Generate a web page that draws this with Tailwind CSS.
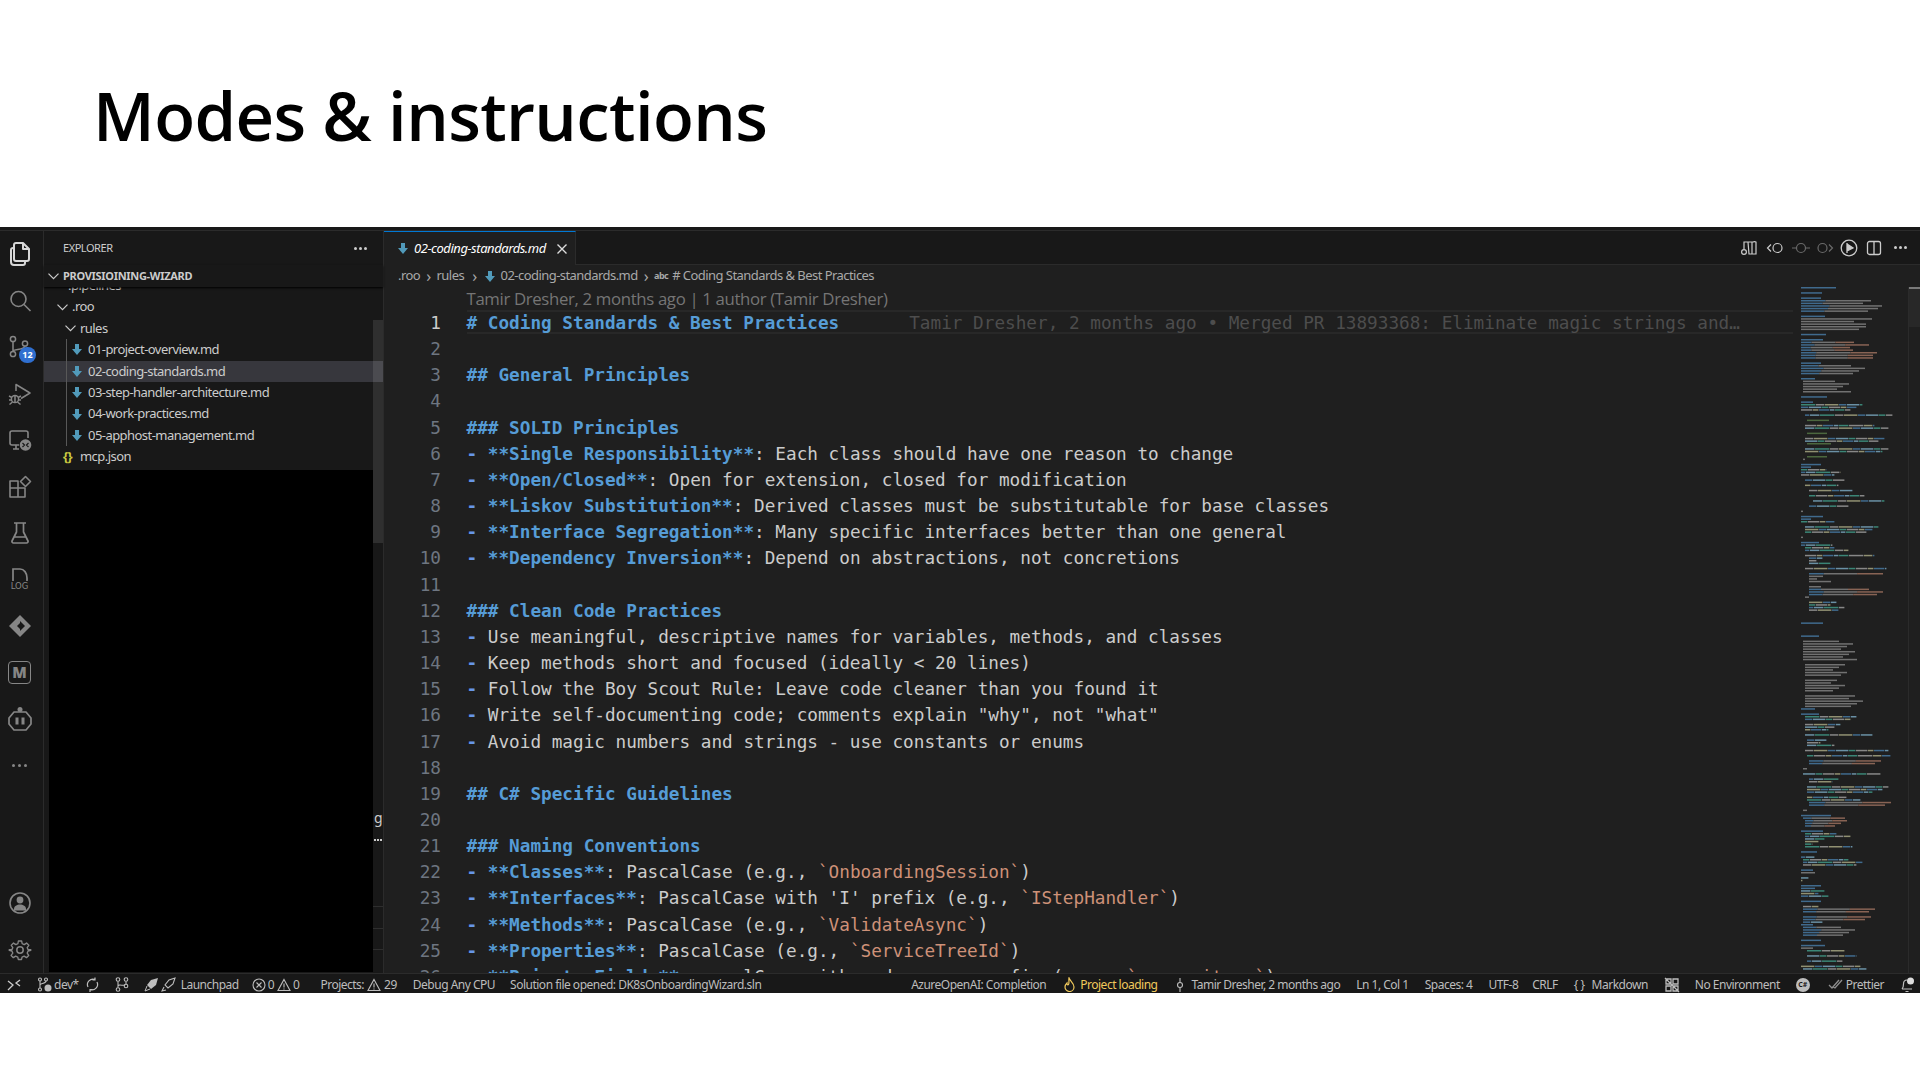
<!DOCTYPE html>
<html lang="en">
<head>
    <meta charset="UTF-8">
    <title>Modes &amp; instructions</title>
    <script src="https://cdn.jsdelivr.net/npm/@tailwindcss/browser@4"></script>
</head>
<body class="bg-white w-[1920px] h-[1080px] overflow-hidden font-['Open_Sans',sans-serif]">
    <header class="h-[227px] pl-[93px] pt-[69px]">
        <h1 class="text-[67px] leading-[92px] font-semibold text-black tracking-[-0.6px]">Modes &amp; instructions</h1>
    </header>

    <div class="h-[766px] flex flex-col bg-[#181818]">
        <div class="h-[4px] shrink-0 border-b border-[#2b2b2b]"></div>
        <div class="flex-1 flex min-h-0">

            <!-- activity bar -->
            <nav class="w-[44px] shrink-0 border-r border-[#2b2b2b] flex flex-col items-center text-[#868686]">
                <div class="w-full h-[46.5px] flex items-center justify-center pr-[4px]">
                    <svg width="24" height="26" viewBox="0 0 24 26" fill="none" stroke="#d7d7d7" stroke-width="2" stroke-linejoin="round"><path d="M8 2h7l6 6v10a2 2 0 0 1-2 2H8a2 2 0 0 1-2-2V4a2 2 0 0 1 2-2z"/><path d="M15 2v6h6"/><path d="M6 7H5a2 2 0 0 0-2 2v12a3 3 0 0 0 3 3h9a2 2 0 0 0 2-2v-2"/></svg>
                </div>
                <div class="w-full h-[46.5px] flex items-center justify-center pr-[4px]">
                    <svg width="24" height="24" viewBox="0 0 24 24" fill="none" stroke="currentColor" stroke-width="1.6"><circle cx="10.5" cy="10" r="7.5"/><path d="M16 15.5l6.5 6.5"/></svg>
                </div>
                <div class="relative w-full h-[46.5px] flex items-center justify-center pr-[4px]">
                    <svg width="24" height="26" viewBox="0 0 24 26" fill="none" stroke="currentColor" stroke-width="1.5"><circle cx="5" cy="5" r="2.6"/><circle cx="5" cy="20" r="2.6"/><circle cx="17" cy="9.5" r="2.6"/><path d="M5 7.6v9.8M17 12.1c0 4-12 3-12 5.3"/></svg>
                    <span class="absolute left-[19px] top-[23px] w-[17px] h-[16px] rounded-full bg-[#2f6fd0] text-white text-[9px] leading-[16px] font-bold text-center">12</span>
                </div>
                <div class="w-full h-[46.5px] flex items-center justify-center pr-[4px]">
                    <svg width="24" height="24" viewBox="0 0 24 24" fill="none" stroke="currentColor" stroke-width="1.5" stroke-linejoin="round"><path d="M8 9V2.5L22 11l-9 5.5"/><circle cx="7" cy="17" r="3.6"/><path d="M1 14l3 1.5M1 18h2.4M1.5 22.5l3-2.5M13 14l-3 1.5M13 18h-2.4M12.5 22.5l-3-2.5M7 13.4v7.2"/></svg>
                </div>
                <div class="w-full h-[46.5px] flex items-center justify-center pr-[4px]">
                    <svg width="24" height="24" viewBox="0 0 24 24" fill="none" stroke="currentColor" stroke-width="1.6"><path d="M11 17H4a2 2 0 0 1-2-2V5a2 2 0 0 1 2-2h14a2 2 0 0 1 2 2v5"/><path d="M5 21h6M8 17v4"/><circle cx="17.5" cy="17" r="5.8" fill="#868686" stroke="none"/><path d="M14.5 15l2 2-2 2M20.5 15l-2 2 2 2" stroke="#181818" stroke-width="1.2"/></svg>
                </div>
                <div class="w-full h-[46.5px] flex items-center justify-center pr-[4px]">
                    <svg width="24" height="24" viewBox="0 0 24 24" fill="none" stroke="currentColor" stroke-width="1.6" stroke-linejoin="round"><path d="M2 6h8v7h7v9H2zM2 13h8v9"/><path d="M17.5 1.5l5 5-5 5-5-5z"/></svg>
                </div>
                <div class="w-full h-[46.5px] flex items-center justify-center pr-[4px]">
                    <svg width="22" height="24" viewBox="0 0 22 24" fill="none" stroke="currentColor" stroke-width="1.7" stroke-linejoin="round"><path d="M5 2h12M7.5 2v9L3 20a1.5 1.5 0 0 0 1.4 2h13.2a1.5 1.5 0 0 0 1.4-2l-4.5-9V2M5.5 16h11"/></svg>
                </div>
                <div class="w-full h-[46.5px] flex flex-col items-center justify-center pr-[4px]">
                    <svg width="16" height="13" viewBox="0 0 16 13" fill="none" stroke="currentColor" stroke-width="1.7"><path d="M1 13V1h7c4 0 7 4 7 9v3"/></svg>
                    <span class="text-[8.5px] leading-[9px] mt-[1px] font-['DejaVu_Sans',sans-serif]">LOG</span>
                </div>
                <div class="w-full h-[46.5px] flex items-center justify-center pr-[4px]">
                    <svg width="24" height="24" viewBox="0 0 24 24"><path d="M12 1l11 11-11 11L1 12z" fill="#868686"/><path d="M12 7l5 5-5 5z" fill="#181818"/><path d="M12 9l-3 3 3 3z" fill="#181818"/></svg>
                </div>
                <div class="w-full h-[46.5px] flex items-center justify-center pr-[4px]">
                    <div class="w-[23px] h-[23px] rounded-[4px] border-[1.5px] border-[#868686] flex items-center justify-center text-[15px] leading-none font-extrabold">M</div>
                </div>
                <div class="w-full h-[46.5px] flex items-center justify-center pr-[4px]">
                    <svg width="24" height="26" viewBox="0 0 24 26" fill="none" stroke="currentColor" stroke-width="1.7" stroke-linejoin="round"><circle cx="12" cy="3.5" r="2.5" fill="#868686" stroke="none"/><path d="M6 6h12l5 6v6l-5 6H6l-5-6v-6z"/><rect x="7.5" y="11.5" width="3" height="7" fill="#868686" stroke="none"/><rect x="13.5" y="11.5" width="3" height="7" fill="#868686" stroke="none"/></svg>
                </div>
                <div class="w-full h-[46.5px] flex items-center justify-center pr-[4px] gap-[3px]">
                    <span class="w-[3px] h-[3px] rounded-full bg-[#868686]"></span>
                    <span class="w-[3px] h-[3px] rounded-full bg-[#868686]"></span>
                    <span class="w-[3px] h-[3px] rounded-full bg-[#868686]"></span>
                </div>
                <div class="mt-auto w-full h-[46.5px] flex items-center justify-center pr-[4px]">
                    <svg width="24" height="24" viewBox="0 0 24 24" fill="none" stroke="currentColor" stroke-width="1.6"><circle cx="12" cy="12" r="10"/><circle cx="12" cy="9" r="3.4" fill="#868686" stroke="none"/><path d="M6 18c0-6 12-6 12 0v1.5H6z" fill="#868686" stroke="none"/></svg>
                </div>
                <div class="w-full h-[46.5px] flex items-center justify-center pr-[4px]">
                    <svg width="24" height="24" viewBox="0 0 24 24" fill="none" stroke="currentColor" stroke-width="1.5" stroke-linejoin="round"><circle cx="12" cy="12" r="3.2"/><path d="M10.2 2h3.6l.6 3 2.3 1 2.6-1.7 2.5 2.5L20 9.4l1 2.2 3 0v.8l-3 .7-1 2.3 1.7 2.6-2.5 2.5-2.6-1.7-2.3 1-.6 2.7h-3.6l-.6-2.7-2.3-1-2.6 1.7-2.5-2.5L4 15.4l-1-2.3-3-.7v-.8l3 0 1-2.2-1.7-2.6 2.5-2.5 2.6 1.7 2.3-1z" transform="translate(1.2 1.2) scale(.9)"/></svg>
                </div>
            </nav>

            <!-- explorer -->
            <aside class="w-[340px] shrink-0 relative flex flex-col border-r border-[#2b2b2b] text-[13px] text-[#cccccc] font-['Noto_Sans',sans-serif] tracking-[-0.55px]">
                <div class="h-[34px] shrink-0 flex items-center justify-between pl-[19px] pr-[16px] text-[11px] tracking-[-0.45px]">
                    <span>EXPLORER</span>
                    <span class="flex gap-[2px]"><i class="w-[3px] h-[3px] rounded-full bg-[#cccccc]"></i><i class="w-[3px] h-[3px] rounded-full bg-[#cccccc]"></i><i class="w-[3px] h-[3px] rounded-full bg-[#cccccc]"></i></span>
                </div>
                <div class="relative z-10 h-[22px] shrink-0 flex items-center bg-[#181818] text-[11px] font-bold tracking-[-0.3px] pl-[4px] shadow-[0_1px_2px_#000]">
                    <svg width="11" height="7" viewBox="0 0 11 7" fill="none" stroke="#cccccc" stroke-width="1.2" class="mr-[4px]"><path d="M.5.7l5 5 5-5"/></svg>
                    PROVISIOINING-WIZARD
                </div>
                <div class="relative h-[183px] shrink-0 overflow-hidden">
                    <div class="-mt-[12px]">
                        <div class="h-[21.4px] flex items-center pl-[24px]">.pipelines</div>
                        <div class="h-[21.4px] flex items-center pl-[13px]"><svg width="11" height="7" viewBox="0 0 11 7" fill="none" stroke="#cccccc" stroke-width="1.2" class="mr-[4px]"><path d="M.5.7l5 5 5-5"/></svg>.roo</div>
                        <div class="h-[21.4px] flex items-center pl-[21px]"><svg width="11" height="7" viewBox="0 0 11 7" fill="none" stroke="#cccccc" stroke-width="1.2" class="mr-[4px]"><path d="M.5.7l5 5 5-5"/></svg>rules</div>
                        <div class="relative">
                            <div class="absolute left-[22px] top-0 bottom-0 w-px bg-[#585858]"></div>
                            <div class="h-[21.4px] flex items-center pl-[28px]"><svg width="10" height="11" viewBox="0 0 10 11" fill="#519aba" class="mr-[6px]"><path d="M3 0h4v5h3l-5 6-5-6h3z"/></svg>01-project-overview.md</div>
                            <div class="h-[21.4px] flex items-center pl-[28px] bg-[#37373d]"><svg width="10" height="11" viewBox="0 0 10 11" fill="#519aba" class="mr-[6px]"><path d="M3 0h4v5h3l-5 6-5-6h3z"/></svg>02-coding-standards.md</div>
                            <div class="h-[21.4px] flex items-center pl-[28px]"><svg width="10" height="11" viewBox="0 0 10 11" fill="#519aba" class="mr-[6px]"><path d="M3 0h4v5h3l-5 6-5-6h3z"/></svg>03-step-handler-architecture.md</div>
                            <div class="h-[21.4px] flex items-center pl-[28px]"><svg width="10" height="11" viewBox="0 0 10 11" fill="#519aba" class="mr-[6px]"><path d="M3 0h4v5h3l-5 6-5-6h3z"/></svg>04-work-practices.md</div>
                            <div class="h-[21.4px] flex items-center pl-[28px]"><svg width="10" height="11" viewBox="0 0 10 11" fill="#519aba" class="mr-[6px]"><path d="M3 0h4v5h3l-5 6-5-6h3z"/></svg>05-apphost-management.md</div>
                        </div>
                        <div class="h-[21.4px] flex items-center pl-[19px]"><span class="w-[17px] text-[#cbcb41] font-bold tracking-[-0.5px]">{}</span>mcp.json</div>
                    </div>
                </div>
                <div class="flex-1 flex min-h-0 pl-[5px] mb-[1px]">
                    <div class="w-[324px] bg-black"></div>
                    <div class="flex-1 relative overflow-hidden text-[14px] leading-[16px]">
                        <div class="pt-[340px] pl-[1px]">g</div>
                        <div class="flex gap-[1px] pt-[13px] pl-[1px]"><i class="w-[2px] h-[2px] bg-[#cccccc]"></i><i class="w-[2px] h-[2px] bg-[#cccccc]"></i><i class="w-[2px] h-[2px] bg-[#cccccc]"></i></div>
                        <div class="h-px bg-[#2e2e2e] mt-[65px]"></div>
                        <div class="h-px bg-[#2e2e2e] mt-[21px]"></div>
                        <div class="h-px bg-[#2e2e2e] mt-[20px]"></div>
                    </div>
                </div>
                <div class="absolute right-0 top-[89px] w-[10px] h-[223px] bg-white/10"></div>
            </aside>

            <!-- editor -->
            <main class="flex-1 min-w-0 flex flex-col bg-[#1f1f1f]">
                <div class="h-[34px] shrink-0 flex items-stretch bg-[#181818] border-b border-[#2b2b2b]">
                    <div class="w-[192px] -mb-px border-t border-r border-t-[#0078d4] border-r-[#2b2b2b] bg-[#1f1f1f] flex items-center pl-[14px] text-[13px] text-[#ffffff] italic font-['Noto_Sans',sans-serif] tracking-[-0.45px]">
                        <svg width="10" height="11" viewBox="0 0 10 11" fill="#519aba" class="mr-[6px]"><path d="M3 0h4v5h3l-5 6-5-6h3z"/></svg>
                        02-coding-standards.md
                        <svg width="12" height="12" viewBox="0 0 12 12" fill="none" stroke="#dddddd" stroke-width="1.4" class="ml-[10px]"><path d="M1.5 1.5l9 9M10.5 1.5l-9 9"/></svg>
                    </div>
                    <div class="ml-auto flex items-center text-[#cccccc] pr-[13px]">
                        <svg width="18" height="18" viewBox="0 0 18 18" fill="none" stroke="currentColor" stroke-width="1.2" class="mr-[8px]"><path d="M8 3h5a3 3 0 0 1 3 0v12h-7zM8 3H4v7M12 3v12"/><circle cx="4" cy="13" r="2.4"/></svg>
                        <svg width="18" height="14" viewBox="0 0 18 14" fill="none" stroke="currentColor" stroke-width="1.2" class="mr-[8px]"><circle cx="11.5" cy="7" r="4.5"/><path d="M5 3.5L1.5 7 5 10.5"/></svg>
                        <svg width="18" height="14" viewBox="0 0 18 14" fill="none" stroke="#6a6a6a" stroke-width="1.2" class="mr-[6px]"><circle cx="9" cy="7" r="4.5"/><path d="M0 7h4.5M13.5 7H18"/></svg>
                        <svg width="18" height="14" viewBox="0 0 18 14" fill="none" stroke="#6a6a6a" stroke-width="1.2" class="mr-[6px]"><circle cx="6.5" cy="7" r="4.5"/><path d="M13 3.5L16.5 7 13 10.5"/></svg>
                        <svg width="18" height="18" viewBox="0 0 18 18" fill="none" stroke="currentColor" stroke-width="1.3" class="mr-[8px]"><circle cx="9" cy="9" r="7.8"/><path d="M7 4v10M7 5l6 4-6 3" fill="currentColor"/></svg>
                        <svg width="16" height="16" viewBox="0 0 16 16" fill="none" stroke="currentColor" stroke-width="1.3" class="mr-[12px]"><rect x="1.5" y="1.5" width="13" height="13" rx="2"/><path d="M8 1.5v13"/></svg>
                        <span class="flex gap-[2px]"><i class="w-[3px] h-[3px] rounded-full bg-[#cccccc]"></i><i class="w-[3px] h-[3px] rounded-full bg-[#cccccc]"></i><i class="w-[3px] h-[3px] rounded-full bg-[#cccccc]"></i></span>
                    </div>
                </div>
                <div class="h-[22px] shrink-0 flex items-center pl-[14px] text-[13px] text-[#a9a9a9] font-['Noto_Sans',sans-serif] tracking-[-0.55px] gap-[6px]">
                    <span>.roo</span><span class="text-[16px] leading-none">›</span><span>rules</span><span class="mx-[2px] text-[16px] leading-none">›</span>
                    <svg width="10" height="11" viewBox="0 0 10 11" fill="#519aba"><path d="M3 0h4v5h3l-5 6-5-6h3z"/></svg>
                    <span>02-coding-standards.md</span><span class="text-[16px] leading-none">›</span><span class="text-[9px] font-bold">abc</span><span class="-ml-[2px]"># Coding Standards &amp; Best Practices</span>
                </div>
                <div class="flex-1 min-h-0 flex">
                    <div class="w-[1416px] shrink-0 overflow-hidden font-['DejaVu_Sans_Mono',monospace] text-[17.7px] text-[#cccccc] whitespace-nowrap">
                        <div class="h-[23px] pl-[82.5px] font-['Open_Sans',sans-serif] text-[16.8px] leading-[24px] text-[#757575] tracking-[-0.35px]">Tamir Dresher, 2 months ago | 1 author (Tamir Dresher)</div>
                        <div class="flex h-[26.17px] leading-[26.17px]"><span class="w-[57px] text-right text-[#cccccc]">1</span><span class="ml-[25.5px] w-[1326px] h-[24px] border-y-2 border-[#282828] leading-[22.5px]"><b class="text-[#569cd6]"># Coding Standards &amp; Best Practices</b><span class="ml-[70px] text-[#4d4d4d]">Tamir Dresher, 2 months ago • Merged PR 13893368: Eliminate magic strings and…</span></span></div>
                        <div class="flex h-[26.17px] leading-[26.17px]"><span class="w-[57px] text-right text-[#6e7681]">2</span></div>
                        <div class="flex h-[26.17px] leading-[26.17px]"><span class="w-[57px] text-right text-[#6e7681]">3</span><span class="ml-[25.5px]"><b class="text-[#569cd6]">## General Principles</b></span></div>
                        <div class="flex h-[26.17px] leading-[26.17px]"><span class="w-[57px] text-right text-[#6e7681]">4</span></div>
                        <div class="flex h-[26.17px] leading-[26.17px]"><span class="w-[57px] text-right text-[#6e7681]">5</span><span class="ml-[25.5px]"><b class="text-[#569cd6]">### SOLID Principles</b></span></div>
                        <div class="flex h-[26.17px] leading-[26.17px]"><span class="w-[57px] text-right text-[#6e7681]">6</span><span class="ml-[25.5px]"><b class="text-[#6796e6]">- </b><b class="text-[#569cd6]">**Single Responsibility**</b>: Each class should have one reason to change</span></div>
                        <div class="flex h-[26.17px] leading-[26.17px]"><span class="w-[57px] text-right text-[#6e7681]">7</span><span class="ml-[25.5px]"><b class="text-[#6796e6]">- </b><b class="text-[#569cd6]">**Open/Closed**</b>: Open for extension, closed for modification</span></div>
                        <div class="flex h-[26.17px] leading-[26.17px]"><span class="w-[57px] text-right text-[#6e7681]">8</span><span class="ml-[25.5px]"><b class="text-[#6796e6]">- </b><b class="text-[#569cd6]">**Liskov Substitution**</b>: Derived classes must be substitutable for base classes</span></div>
                        <div class="flex h-[26.17px] leading-[26.17px]"><span class="w-[57px] text-right text-[#6e7681]">9</span><span class="ml-[25.5px]"><b class="text-[#6796e6]">- </b><b class="text-[#569cd6]">**Interface Segregation**</b>: Many specific interfaces better than one general</span></div>
                        <div class="flex h-[26.17px] leading-[26.17px]"><span class="w-[57px] text-right text-[#6e7681]">10</span><span class="ml-[25.5px]"><b class="text-[#6796e6]">- </b><b class="text-[#569cd6]">**Dependency Inversion**</b>: Depend on abstractions, not concretions</span></div>
                        <div class="flex h-[26.17px] leading-[26.17px]"><span class="w-[57px] text-right text-[#6e7681]">11</span></div>
                        <div class="flex h-[26.17px] leading-[26.17px]"><span class="w-[57px] text-right text-[#6e7681]">12</span><span class="ml-[25.5px]"><b class="text-[#569cd6]">### Clean Code Practices</b></span></div>
                        <div class="flex h-[26.17px] leading-[26.17px]"><span class="w-[57px] text-right text-[#6e7681]">13</span><span class="ml-[25.5px]"><b class="text-[#6796e6]">- </b>Use meaningful, descriptive names for variables, methods, and classes</span></div>
                        <div class="flex h-[26.17px] leading-[26.17px]"><span class="w-[57px] text-right text-[#6e7681]">14</span><span class="ml-[25.5px]"><b class="text-[#6796e6]">- </b>Keep methods short and focused (ideally &lt; 20 lines)</span></div>
                        <div class="flex h-[26.17px] leading-[26.17px]"><span class="w-[57px] text-right text-[#6e7681]">15</span><span class="ml-[25.5px]"><b class="text-[#6796e6]">- </b>Follow the Boy Scout Rule: Leave code cleaner than you found it</span></div>
                        <div class="flex h-[26.17px] leading-[26.17px]"><span class="w-[57px] text-right text-[#6e7681]">16</span><span class="ml-[25.5px]"><b class="text-[#6796e6]">- </b>Write self-documenting code; comments explain "why", not "what"</span></div>
                        <div class="flex h-[26.17px] leading-[26.17px]"><span class="w-[57px] text-right text-[#6e7681]">17</span><span class="ml-[25.5px]"><b class="text-[#6796e6]">- </b>Avoid magic numbers and strings - use constants or enums</span></div>
                        <div class="flex h-[26.17px] leading-[26.17px]"><span class="w-[57px] text-right text-[#6e7681]">18</span></div>
                        <div class="flex h-[26.17px] leading-[26.17px]"><span class="w-[57px] text-right text-[#6e7681]">19</span><span class="ml-[25.5px]"><b class="text-[#569cd6]">## C# Specific Guidelines</b></span></div>
                        <div class="flex h-[26.17px] leading-[26.17px]"><span class="w-[57px] text-right text-[#6e7681]">20</span></div>
                        <div class="flex h-[26.17px] leading-[26.17px]"><span class="w-[57px] text-right text-[#6e7681]">21</span><span class="ml-[25.5px]"><b class="text-[#569cd6]">### Naming Conventions</b></span></div>
                        <div class="flex h-[26.17px] leading-[26.17px]"><span class="w-[57px] text-right text-[#6e7681]">22</span><span class="ml-[25.5px]"><b class="text-[#6796e6]">- </b><b class="text-[#569cd6]">**Classes**</b>: PascalCase (e.g., <span class="text-[#ce9178]">`OnboardingSession`</span>)</span></div>
                        <div class="flex h-[26.17px] leading-[26.17px]"><span class="w-[57px] text-right text-[#6e7681]">23</span><span class="ml-[25.5px]"><b class="text-[#6796e6]">- </b><b class="text-[#569cd6]">**Interfaces**</b>: PascalCase with 'I' prefix (e.g., <span class="text-[#ce9178]">`IStepHandler`</span>)</span></div>
                        <div class="flex h-[26.17px] leading-[26.17px]"><span class="w-[57px] text-right text-[#6e7681]">24</span><span class="ml-[25.5px]"><b class="text-[#6796e6]">- </b><b class="text-[#569cd6]">**Methods**</b>: PascalCase (e.g., <span class="text-[#ce9178]">`ValidateAsync`</span>)</span></div>
                        <div class="flex h-[26.17px] leading-[26.17px]"><span class="w-[57px] text-right text-[#6e7681]">25</span><span class="ml-[25.5px]"><b class="text-[#6796e6]">- </b><b class="text-[#569cd6]">**Properties**</b>: PascalCase (e.g., <span class="text-[#ce9178]">`ServiceTreeId`</span>)</span></div>
                        <div class="flex h-[26.17px] leading-[26.17px]"><span class="w-[57px] text-right text-[#6e7681]">26</span><span class="ml-[25.5px]"><b class="text-[#6796e6]">- </b><b class="text-[#569cd6]">**Private Fields**</b>: camelCase with underscore prefix (e.g., <span class="text-[#ce9178]">`_repository`</span>)</span></div>
                    </div>
                    <div class="w-[108px] shrink-0 overflow-hidden">
                        <svg id="minimap" width="108" height="687" class="block opacity-60"></svg>
                    </div>
                    <div class="flex-1 border-l border-[#2b2b2b]">
                        <div class="h-[40px] border-t-2 border-[#7a7a7a] bg-[#282828]"></div>
                    </div>
                </div>
            </main>
        </div>

        <!-- status bar -->
        <footer class="h-[20px] shrink-0 flex items-center pt-[2px] border-t border-[#2b2b2b] text-[12px] text-[#bdbdbd] font-['Noto_Sans',sans-serif] tracking-[-0.5px] whitespace-nowrap">
            <svg width="14" height="12" viewBox="0 0 14 12" fill="none" stroke="#cccccc" stroke-width="1.3" class="ml-[7px] mr-[16px]"><path d="M1 2l5 4-5 5M13 1L9 4l4 3"/></svg>
            <svg width="15" height="15" viewBox="0 0 15 15" fill="none" stroke="#bdbdbd" stroke-width="1.1"><circle cx="3" cy="2.5" r="1.5"/><circle cx="3" cy="12.5" r="1.5"/><circle cx="9" cy="2.5" r="1.5"/><path d="M3 4v7M9 4c0 3-6 2-6 4"/><circle cx="11" cy="11" r="3.5" fill="#bdbdbd" stroke="none"/></svg>
            <span class="ml-[2px]">dev*</span>
            <svg width="15" height="15" viewBox="0 0 15 15" fill="none" stroke="#bdbdbd" stroke-width="1.2" class="ml-[6px]"><path d="M3 10A5.5 5.5 0 0 1 10 2.5M12 5a5.5 5.5 0 0 1-7 7.5M10 .5v2.5H7.5M5 15v-2.5h2.5"/></svg>
            <svg width="15" height="15" viewBox="0 0 15 15" fill="none" stroke="#bdbdbd" stroke-width="1.1" class="ml-[15px]"><circle cx="3" cy="2.5" r="1.8"/><circle cx="3" cy="12.5" r="1.8"/><circle cx="11" cy="2.5" r="1.8"/><circle cx="11" cy="9" r="1.8"/><path d="M3 4.5v6M11 4.5v2.5M3 9c0-2 6 0 7-1"/></svg>
            <svg width="16" height="15" viewBox="0 0 16 15" class="ml-[14px]"><path d="M14 1L7 3 3 8l4 4 5-4z" fill="#bdbdbd"/><path d="M3 9l-2 5 5-2" fill="none" stroke="#bdbdbd"/></svg>
            <svg width="16" height="15" viewBox="0 0 16 15" fill="none" stroke="#bdbdbd" stroke-width="1.1" class="ml-[1px]"><path d="M14 1L8 3 4 8l3 3 5-4zM3 10l-2 4 4-1"/></svg>
            <span class="ml-[4px]">Launchpad</span>
            <svg width="14" height="14" viewBox="0 0 14 14" fill="none" stroke="#bdbdbd" stroke-width="1.1" class="ml-[13px]"><circle cx="7" cy="7" r="6"/><path d="M4.5 4.5l5 5M9.5 4.5l-5 5"/></svg>
            <span class="ml-[2px]">0</span>
            <svg width="14" height="14" viewBox="0 0 14 14" fill="none" stroke="#bdbdbd" stroke-width="1.1" class="ml-[3px]"><path d="M7 1.5l6 11H1zM7 5.5v4M7 10.5v1"/></svg>
            <span class="ml-[2px]">0</span>
            <span class="ml-[21px]">Projects:</span>
            <svg width="14" height="14" viewBox="0 0 14 14" fill="none" stroke="#bdbdbd" stroke-width="1.1" class="ml-[3px]"><path d="M7 1.5l6 11H1zM7 5.5v4M7 10.5v1"/></svg>
            <span class="ml-[3px]">29</span>
            <span class="ml-[16px]">Debug Any CPU</span>
            <span class="ml-[15px]">Solution file opened: DK8sOnboardingWizard.sln</span>
            <span class="ml-auto">AzureOpenAI: Completion</span>
            <svg width="13" height="15" viewBox="0 0 13 15" fill="none" stroke="#f0c95c" stroke-width="1.2" class="ml-[17px]"><path d="M6 1c1 3 5 5 5 9a4.5 4.5 0 0 1-9 0c0-2 1-3 2-4 0 2 1 2 1.5 1.5C6.5 6 5.5 3 6 1z"/></svg>
            <span class="ml-[4px] text-[#f0c95c]">Project loading</span>
            <svg width="8" height="14" viewBox="0 0 8 14" fill="none" stroke="#bdbdbd" stroke-width="1.1" class="ml-[19px]"><circle cx="4" cy="7" r="2.5"/><path d="M4 0v4.5M4 9.5V14"/></svg>
            <span class="ml-[7px]">Tamir Dresher, 2 months ago</span>
            <span class="ml-[16px]">Ln 1, Col 1</span>
            <span class="ml-[16px]">Spaces: 4</span>
            <span class="ml-[16px]">UTF-8</span>
            <span class="ml-[14px]">CRLF</span>
            <span class="ml-[16px]">{ }</span>
            <span class="ml-[7px]">Markdown</span>
            <svg width="16" height="16" viewBox="0 0 16 16" fill="none" stroke="#bdbdbd" stroke-width="1.3" class="ml-[16px]"><path d="M2 2h5v5H2zM9 2h5v5H9zM2 9h5v5H2zM9 9h5v5H9zM1 1l14 14"/></svg>
            <span class="ml-[15px]">No Environment</span>
            <span class="ml-[16px] w-[14px] h-[14px] rounded-full bg-[#bdbdbd] text-[#181818] text-[7px] leading-[14px] text-center font-bold tracking-normal">C#</span>
            <svg width="16" height="11" viewBox="0 0 16 11" fill="none" stroke="#8f8f8f" stroke-width="1.3" class="ml-[18px]"><path d="M1 6l3 3 7-8M5 8l2 1 7-8"/></svg>
            <span class="ml-[2px]">Prettier</span>
            <svg width="15" height="16" viewBox="0 0 15 16" fill="none" stroke="#bdbdbd" stroke-width="1.2" class="ml-[16px] mr-[5px]"><path d="M2 12c1-1 1.5-2 1.5-5S5 3 7 3M2 12h10M5.5 14.5h3"/><circle cx="10.5" cy="4" r="3.5" fill="#dddddd" stroke="none"/></svg>
        </footer>
    </div>

    <script>
        // minimap rows: [row, count, indent, length, kind]
        var blocks = [
            [1,1,0,35,'h'],[3,1,0,21,'h'],[5,1,0,20,'h'],[6,1,0,70,'b'],[7,1,0,62,'b'],[8,1,0,81,'b'],[9,1,0,77,'b'],[10,1,0,67,'b'],
            [12,1,0,24,'h'],[13,1,0,71,'t'],[14,1,0,53,'t'],[15,1,0,65,'t'],[16,1,0,65,'t'],[17,1,0,58,'t'],[19,1,0,25,'h'],[21,1,0,22,'h'],
            [22,1,0,53,'o'],[23,1,0,68,'o'],[24,1,0,49,'o'],[25,1,0,52,'o'],[26,1,0,76,'o'],[27,1,0,72,'o'],[28,1,0,72,'o'],
            [30,1,0,20,'h'],[31,4,0,64,'b'],[36,1,0,14,'h'],[37,5,2,50,'t'],[43,1,0,26,'h'],[45,1,0,12,'h'],[46,3,0,66,'c'],
            [50,1,4,88,'c'],[52,1,6,22,'g'],[54,2,4,86,'c'],[57,1,6,20,'g'],[59,2,4,86,'c'],[61,1,6,24,'g'],[63,2,4,86,'c'],[66,1,6,20,'g'],
            [67,1,2,2,'t'],[69,1,0,20,'h'],[70,1,0,10,'h'],[71,3,0,40,'c'],[75,1,4,40,'c'],[77,1,4,34,'c'],[79,1,8,44,'c'],[81,1,8,56,'c'],[83,1,12,72,'c'],[85,1,8,40,'c'],[87,1,0,2,'t'],
            [89,1,0,22,'h'],[90,1,0,10,'h'],[91,1,0,34,'c'],[93,3,4,76,'c'],[97,1,0,2,'t'],[99,1,0,18,'h'],[100,1,0,32,'c'],[101,2,4,44,'c'],[104,1,4,70,'c'],[105,3,8,24,'c'],
            [109,1,4,82,'c'],[111,1,8,74,'o'],[112,3,8,22,'t'],[116,1,8,12,'t'],[117,3,8,78,'o'],[120,2,4,4,'t'],
            [122,4,8,36,'c'],[128,2,0,4,'t'],[130,1,0,22,'h'],[135,1,0,18,'h'],[137,8,2,54,'t'],[146,5,4,44,'t'],[152,5,4,40,'t'],[158,5,4,62,'t'],
            [163,1,0,14,'h'],[165,1,0,18,'h'],[166,2,4,56,'c'],[169,3,4,42,'c'],[173,1,4,68,'c'],[175,3,6,30,'c'],[179,1,4,84,'c'],[181,1,6,84,'c'],[183,2,8,74,'o'],
            [186,1,2,4,'t'],[188,1,2,78,'c'],[190,2,8,30,'c'],[193,2,6,84,'c'],[195,1,6,66,'c'],[197,2,6,58,'c'],[199,2,8,88,'o'],[202,1,2,4,'t'],
            [204,1,0,30,'h'],[205,1,2,42,'o'],[206,3,4,46,'o'],[210,1,0,22,'h'],[211,2,4,46,'c'],[213,3,4,22,'c'],[216,1,4,48,'c'],[218,1,0,16,'h'],[220,1,0,14,'c'],[221,3,2,60,'c'],[225,1,0,12,'h'],[226,1,0,14,'t'],
            [228,2,0,20,'c'],[231,1,0,20,'h'],[232,1,0,14,'h'],[233,2,0,26,'c'],[235,1,0,28,'c'],[237,1,0,20,'h'],[239,1,2,16,'c'],[240,2,2,72,'o'],[243,2,2,70,'o'],[245,1,2,20,'c'],
            [246,1,0,12,'h'],[247,4,2,56,'b'],[252,1,0,20,'h'],[254,1,0,24,'h'],[255,1,0,12,'t'],[256,1,6,38,'c'],[258,1,6,50,'c'],[260,1,6,36,'c'],[262,1,0,60,'c'],[263,1,2,64,'c']
        ];
        var code = ['#569cd6', '#9cdcfe', '#4ec9b0', '#cccccc', '#dcdcaa'];
        var out = '';
        function bar(x, y, w, fill) {
            out += '<rect x="' + x + '" y="' + y + '" width="' + w + '" height="1.5" fill="' + fill + '"/>';
        }
        blocks.forEach(function(b) {
            for (var i = 0; i < b[1]; i++) {
                var y = (b[0] + i - 1) * 2.6;
                var seed = (b[0] * 7 + i * 13) % 10;
                var len = b[1] > 1 ? b[3] - seed * 2 : b[3];
                var x = b[2] + 1;
                if (b[4] == 'h') bar(x, y, len, '#569cd6');
                if (b[4] == 't') bar(x, y, len, '#a8a8a8');
                if (b[4] == 'g') bar(x, y, len, '#6a9955');
                if (b[4] == 'b') { bar(x, y, len * .35, '#569cd6'); bar(x + len * .35, y, len * .65, '#a8a8a8'); }
                if (b[4] == 'o') { bar(x, y, len * .2, '#569cd6'); bar(x + len * .2, y, len * .45, '#a8a8a8'); bar(x + len * .65, y, len * .35, '#ce9178'); }
                if (b[4] == 'c') {
                    var done = 0, n = seed;
                    while (done < len) {
                        var w = Math.min(5 + (n * 5) % 11, len - done);
                        bar(x + done, y, w - .6, code[n % 5]);
                        done += w;
                        n++;
                    }
                }
            }
        });
        document.getElementById('minimap').innerHTML = out;
    </script>
</body>
</html>
